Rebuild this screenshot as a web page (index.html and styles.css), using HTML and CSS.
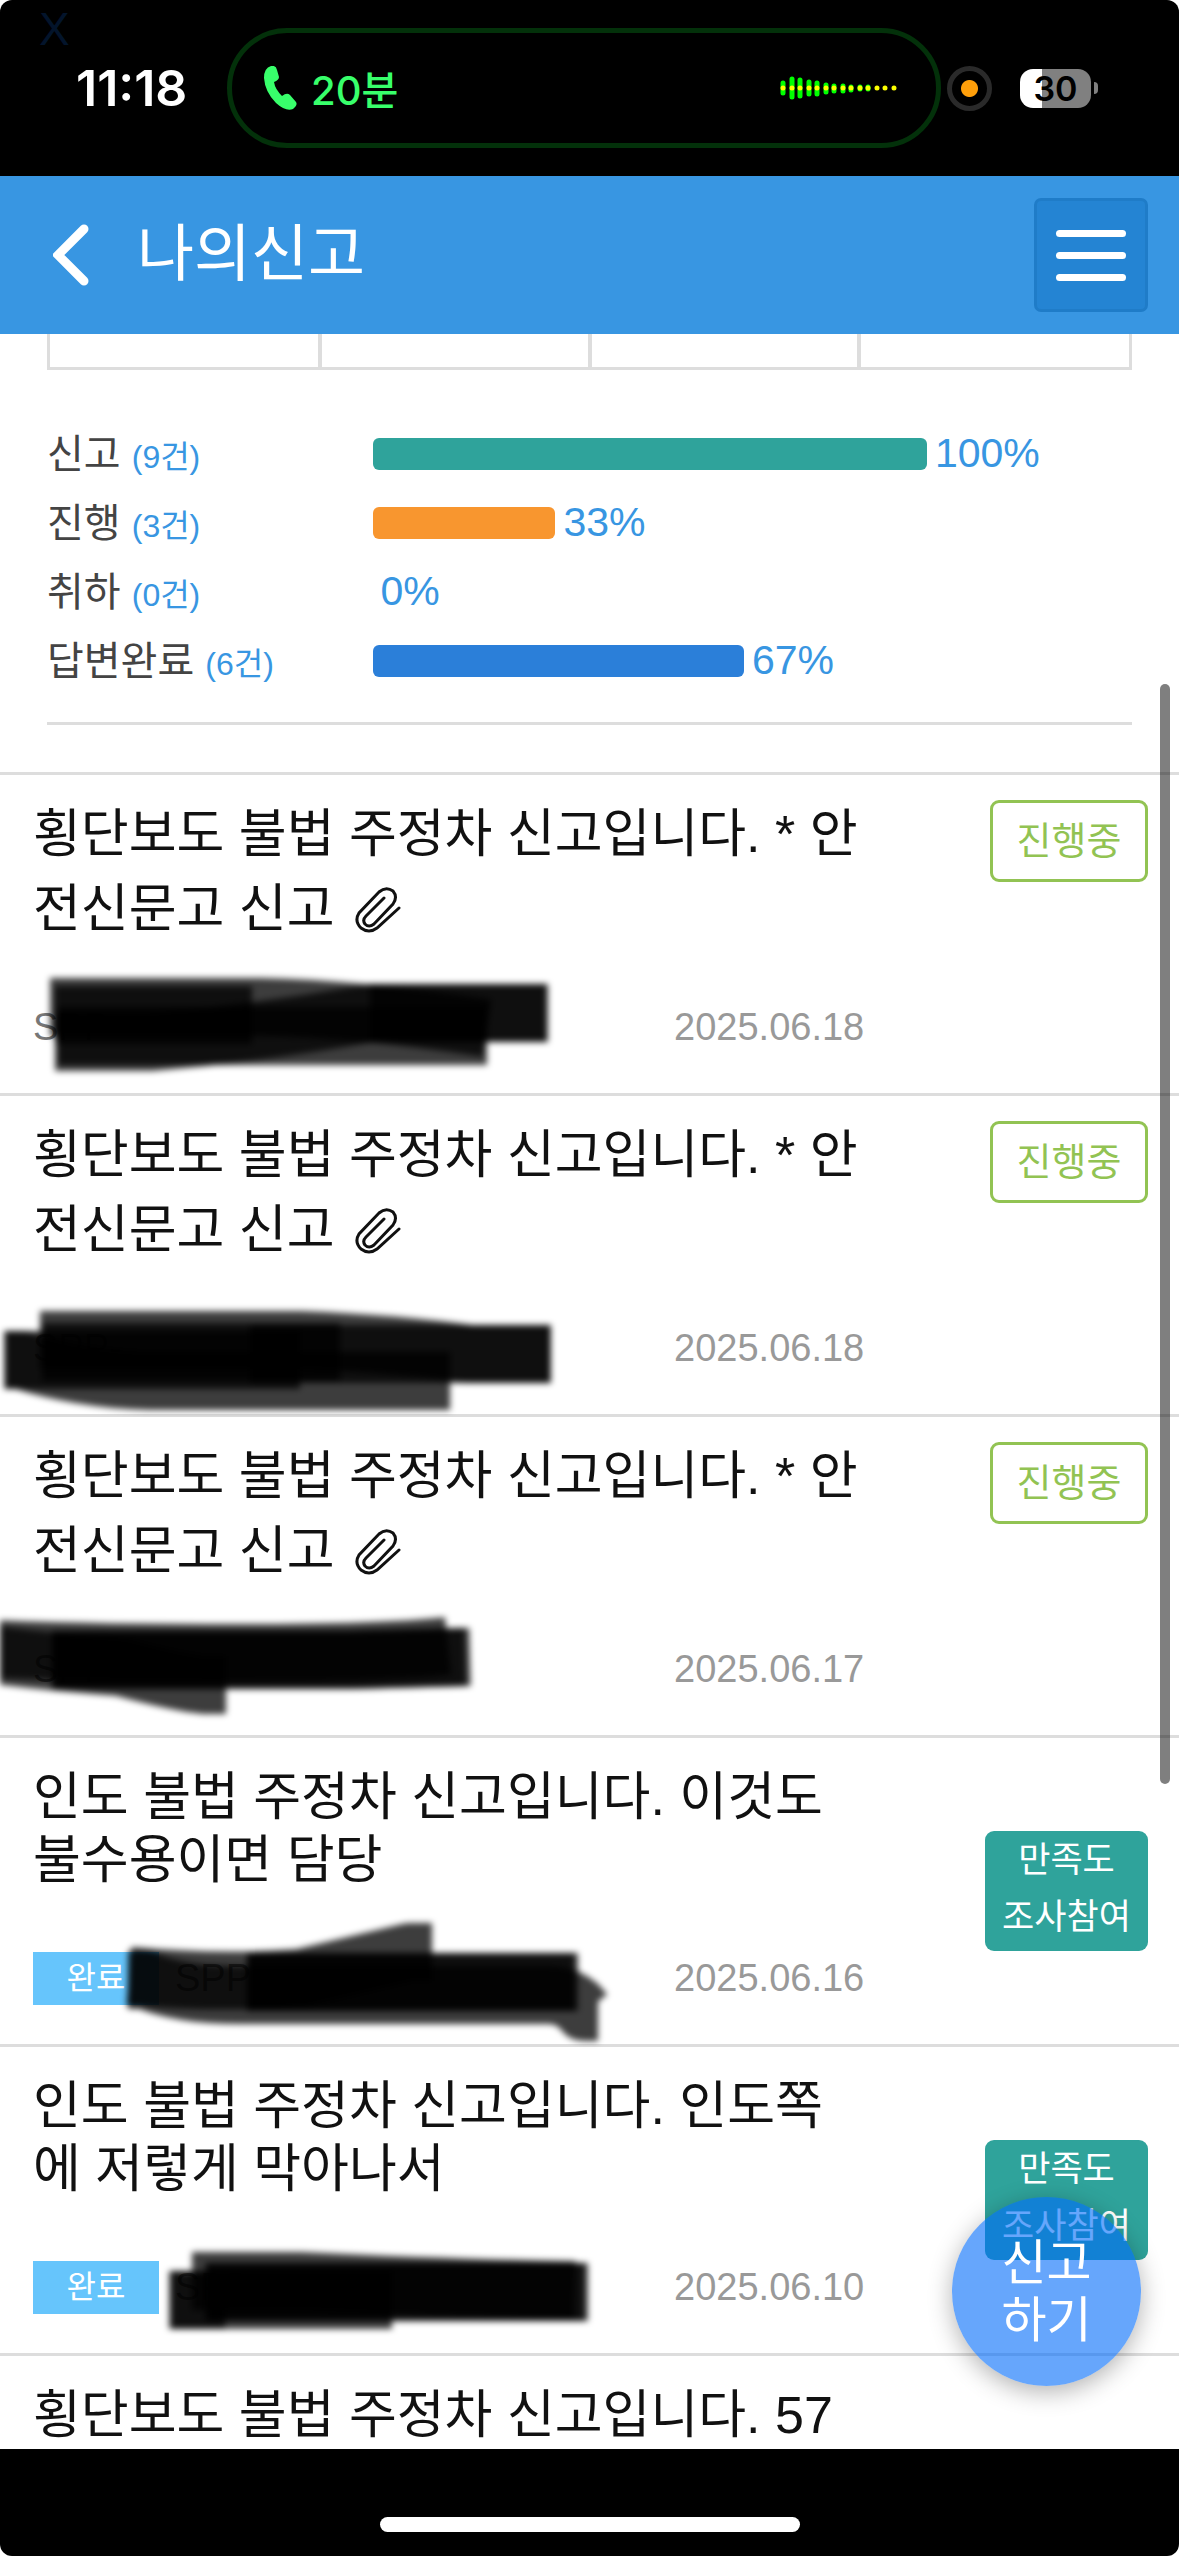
FILE: index.html
```html
<!DOCTYPE html>
<html lang="ko">
<head>
  <meta charset="UTF-8" />
  <meta name="viewport" content="width=device-width, initial-scale=1.0"/>
  <title>나의신고</title>
  <link rel="stylesheet" href="styles.css">
</head>
<body>

<div class="phone">

  <div class="status-bar">
    <span class="ghost-close">X</span>
    <div class="clock">11:18</div>
    <div class="island">
      <svg class="phone-icon" viewBox="0 0 33 45" aria-hidden="true">
        <path d="M0 12Q0 2 7 0Q12 -1 13 4L15 11Q15 14 10 16Q11 23 18 30Q23 26 26 29L32 36Q34 39 29 43Q22 46 12 37Q1 26 0 12Z"/>
      </svg>
      <span class="call-time">20분</span>
      <svg class="wave" viewBox="0 0 118 24" aria-hidden="true">
        <path class="wave-bar" d="M3 7v10M12 3v18M20 4v16M29 6v12M37 7v11M46 9v7M54 10v5M63 10v5M71 11v3M80 11v2M88 11v2"/>
        <path class="wave-dot" d="M3 12h0M12 12h0M20 12h0M29 12h0M37 12h0M46 12h0M54 12h0M63 12h0M71 12h0M80 12h0M88 12h0M97 12h0M105 12h0M114 12h0"/>
      </svg>
    </div>
    <div class="status-right">
      <span class="mic-dot"></span>
      <div class="battery-wrap">
        <span class="battery">30</span>
        <span class="battery-nub"></span>
      </div>
    </div>
  </div>

  <header class="header">
    <button class="back" type="button" aria-label="뒤로">
      <svg viewBox="0 0 36 62" aria-hidden="true"><path d="M31 5L5 31L31 57"/></svg>
    </button>
    <h1 class="title">나의신고</h1>
    <button class="menu" type="button" aria-label="메뉴">
      <span></span><span></span><span></span>
    </button>
  </header>

  <main class="content">
    <section class="summary">
      <div class="tabs"><div></div><div></div><div></div><div></div></div>
      <ul class="stats">
        <li><div class="stat-name">신고 <small>(9건)</small></div><div class="stat-value"><span class="bar teal" style="--value: 100"></span>100%</div></li>
        <li><div class="stat-name">진행 <small>(3건)</small></div><div class="stat-value"><span class="bar orange" style="--value: 33"></span>33%</div></li>
        <li><div class="stat-name">취하 <small>(0건)</small></div><div class="stat-value"><span class="bar" style="--value: 0"></span>0%</div></li>
        <li><div class="stat-name">답변완료 <small>(6건)</small></div><div class="stat-value"><span class="bar blue" style="--value: 67"></span>67%</div></li>
      </ul>
    </section>

    <ul class="reports">
      <li class="report">
        <div class="report-body">
          <a class="report-title" href="#">횡단보도 불법 주정차 신고입니다. * 안전신문고 신고 <svg class="clip" viewBox="0 0 46 46" aria-hidden="true"><path d="M44 21L22 41Q14 47 6 41Q-1 34 4 26L24 5Q31 -1 38 4Q43 10 38 17L19 37Q14 41 10 37Q7 33 11 29L29 11"/></svg></a>
          <div class="meta"><span class="number">SPP-</span><time class="date">2025.06.18</time></div>
        </div>
        <span class="badge">진행중</span>
        <svg class="marker" viewBox="0 0 640 140" aria-hidden="true">
          <path d="M50 54H260Q360 56 487 75"/>
          <path d="M55 89H150Q260 80 372 60H548"/>
          <path d="M58 83H487"/>
          <path d="M55 62H252"/>
          <path d="M370 60H546"/>
        </svg>
      </li>

      <li class="report">
        <div class="report-body">
          <a class="report-title" href="#">횡단보도 불법 주정차 신고입니다. * 안전신문고 신고 <svg class="clip" viewBox="0 0 46 46" aria-hidden="true"><path d="M44 21L22 41Q14 47 6 41Q-1 34 4 26L24 5Q31 -1 38 4Q43 10 38 17L19 37Q14 41 10 37Q7 33 11 29L29 11"/></svg></a>
          <div class="meta"><span class="number">SPP-</span><time class="date">2025.06.18</time></div>
        </div>
        <span class="badge">진행중</span>
        <svg class="marker" viewBox="0 0 640 140" aria-hidden="true">
          <path d="M40 66H300Q400 70 470 80H551"/>
          <path d="M4 86H20Q80 105 150 107H450"/>
          <path d="M42 78H340"/>
          <path d="M6 86H300"/>
          <path d="M250 80H550"/>
        </svg>
      </li>

      <li class="report">
        <div class="report-body">
          <a class="report-title" href="#">횡단보도 불법 주정차 신고입니다. * 안전신문고 신고 <svg class="clip" viewBox="0 0 46 46" aria-hidden="true"><path d="M44 21L22 41Q14 47 6 41Q-1 34 4 26L24 5Q31 -1 38 4Q43 10 38 17L19 37Q14 41 10 37Q7 33 11 29L29 11"/></svg></a>
          <div class="meta"><span class="number">SPP-</span><time class="date">2025.06.17</time></div>
        </div>
        <span class="badge">진행중</span>
        <svg class="marker" viewBox="0 0 640 140" aria-hidden="true">
          <path d="M-5 54Q100 58 240 58T448 51"/>
          <path d="M-5 60Q60 68 120 72Q180 88 205 90H226"/>
          <path d="M52 65H350L470 62"/>
          <path d="M52 65H350L465 62"/>
        </svg>
      </li>

      <li class="report done">
        <div class="report-body">
          <a class="report-title" href="#">인도 불법 주정차 신고입니다. 이것도 불수용이면 담당</a>
          <div class="meta"><span class="state">완료</span><span class="number">SPP-</span><time class="date">2025.06.16</time></div>
        </div>
        <a class="survey" href="#">만족도<br>조사참여</a>
        <svg class="marker" viewBox="0 0 640 140" aria-hidden="true">
          <path d="M129 72Q220 80 300 74L410 48H432"/>
          <path d="M128 76H145Q180 91 240 91H550Q572 92 584 108H598"/>
          <path d="M247 78H578"/>
          <path d="M247 78H574"/>
        </svg>
      </li>

      <li class="report done">
        <div class="report-body">
          <a class="report-title" href="#">인도 불법 주정차 신고입니다. 인도쪽에 저렇게 막아나서</a>
          <div class="meta"><span class="state">완료</span><span class="number">SPP-</span><time class="date">2025.06.10</time></div>
        </div>
        <a class="survey" href="#">만족도<br>조사참여</a>
        <svg class="marker" viewBox="0 0 640 140" aria-hidden="true">
          <path d="M192 68H300Q450 75 575 77"/>
          <path d="M169 87H392"/>
          <path d="M172 87H225"/>
          <path d="M205 79H588"/>
          <path d="M208 79H584"/>
        </svg>
      </li>

      <li class="report done">
        <div class="report-body">
          <a class="report-title" href="#">횡단보도 불법 주정차 신고입니다. 57</a>
        </div>
        <a class="survey" href="#" aria-label="만족도 조사참여"></a>
      </li>
    </ul>

    <div class="scroll-thumb"></div>
    <button class="fab" type="button">신고<br>하기</button>
  </main>

  <div class="home-bar"><span></span></div>

</div>

</body>
</html>
```
FILE: styles.css
```css
* {
  box-sizing: border-box;
}
body {
  margin: 0;
  background: #fff;
  color: #111;
  font-family: "Liberation Sans", "Noto Sans CJK KR", sans-serif;
}
ul {
  list-style: none;
  margin: 0;
  padding: 0;
}
a {
  color: inherit;
  text-decoration: none;
}
button {
  font-family: inherit;
  padding: 0;
  border: 0;
  background: none;
  color: #fff;
}
.phone {
  display: flex;
  flex-direction: column;
  height: 100vh;
  border-radius: 12px;
  overflow: hidden;
}

/* status bar */
.status-bar {
  position: relative;
  flex: none;
  display: grid;
  grid-template-columns: 227px 1fr 238px;
  align-items: center;
  height: 176px;
  background: #000;
  color: #fff;
  font-family: Inter, "Noto Sans CJK KR", sans-serif;
}
.ghost-close {
  position: absolute;
  left: 39px;
  top: 2px;
  color: #03142b;
  font-family: "Liberation Sans", sans-serif;
  font-size: 46px;
}
.clock {
  padding-left: 76px;
  font-size: 50px;
  font-weight: 600;
}
.island {
  display: flex;
  align-items: center;
  height: 120px;
  padding: 0 38px 0 32px;
  border: 5px solid #03310a;
  border-radius: 60px;
}
.phone-icon {
  width: 33px;
  height: 45px;
  fill: #38ff6b;
}
.call-time {
  margin-left: 14px;
  color: #38ff6b;
  font-size: 40px;
  font-weight: 500;
}
.wave {
  width: 118px;
  height: 24px;
  margin-left: auto;
  fill: none;
  stroke-linecap: round;
  stroke-width: 5;
}
.wave-bar {
  stroke: #0f0;
}
.wave-dot {
  stroke: #fdff00;
}
.status-right {
  display: flex;
  align-items: center;
  gap: 28px;
  padding-left: 6px;
}
.mic-dot {
  width: 45px;
  height: 45px;
  border: 5px solid #2a2a2a;
  border-radius: 50%;
  background: radial-gradient(circle, #ff9f0a 8px, #000 9px);
}
.battery-wrap {
  display: flex;
  align-items: center;
  gap: 3px;
}
.battery {
  width: 71px;
  height: 39px;
  border-radius: 13px;
  background: linear-gradient(to right, #fff 31%, #808080 31%);
  color: #000;
  font-size: 34px;
  font-weight: 600;
  line-height: 39px;
  text-align: center;
}
.battery-nub {
  width: 4px;
  height: 12px;
  border-radius: 0 4px 4px 0;
  background: #808080;
}

/* header */
.header {
  flex: none;
  display: flex;
  align-items: center;
  height: 158px;
  padding: 0 31px 0 53px;
  background: #3896e2;
  color: #fff;
}
.back svg {
  display: block;
  width: 36px;
  height: 62px;
  fill: none;
  stroke: #fff;
  stroke-width: 9;
  stroke-linecap: round;
}
.title {
  flex: 1;
  margin: 0 0 0 48px;
  font-size: 62px;
  font-weight: 400;
  line-height: 80px;
}
.menu {
  display: flex;
  flex-direction: column;
  align-items: center;
  justify-content: center;
  gap: 15px;
  width: 114px;
  height: 114px;
  border: 3px solid #1f7cc8;
  border-radius: 7px;
  background: #2484d3;
}
.menu span {
  width: 70px;
  height: 7px;
  border-radius: 4px;
  background: #fff;
}

/* summary */
.content {
  position: relative;
  flex: 1;
  min-height: 0;
  overflow: hidden;
}
.summary {
  margin: 0 47px;
  border-bottom: 3px solid #ddd;
}
.tabs {
  display: grid;
  grid-template-columns: repeat(4, 1fr);
  height: 36px;
  border: 3px solid #ddd;
  border-top: 0;
}
.tabs div + div {
  margin-left: -2px;
  border-left: 4px solid #ddd;
}
.stats {
  padding: 49px 0 27px;
}
.stats li {
  display: flex;
  align-items: center;
  height: 69px;
}
.stat-name {
  width: 30%;
  padding-bottom: 6px;
  color: #444;
  font-size: 40px;
}
.stat-name small {
  color: #3896e2;
  font-size: 32px;
}
.stat-value {
  flex: 1;
  display: flex;
  align-items: center;
  gap: 8px;
  color: #3896e2;
  font-size: 41px;
}
.bar {
  width: calc(var(--value) * 0.73%);
  height: 32px;
  border-radius: 6px;
}
.teal {
  background: #2fa39b;
}
.orange {
  background: #f8962f;
}
.blue {
  background: #2b7fd9;
}

/* report list */
.reports {
  margin-top: 47px;
  border-top: 3px solid #ddd;
}
.report {
  position: relative;
  display: grid;
  grid-template-columns: 75% 25%;
  min-height: 309px;
  padding: 0 31px 0 33px;
  border-bottom: 3px solid #ddd;
}
.report-body {
  padding: 22px 0 39px;
}
.report-title {
  display: block;
  font-size: 52px;
  line-height: 75px;
  word-break: break-all;
}
.done .report-body {
  padding-top: 28px;
}
.done .report-title {
  line-height: 63px;
}
.clip {
  width: 46px;
  height: 46px;
  margin-left: 6px;
  vertical-align: -6px;
  fill: none;
  stroke: #111;
  stroke-width: 3;
  stroke-linecap: round;
}
.meta {
  display: flex;
  align-items: center;
  height: 53px;
  margin-top: 54px;
  font-size: 38px;
}
.done .meta {
  margin-top: 60px;
}
.state {
  width: 126px;
  margin-right: 16px;
  background: #66c5fc;
  color: #fff;
  font-size: 32px;
  line-height: 53px;
  text-align: center;
}
.number {
  color: #777;
}
.date {
  margin-left: auto;
  padding-right: 5px;
  color: #999;
}
.badge {
  justify-self: end;
  width: 158px;
  height: 82px;
  margin-top: 25px;
  border: 3px solid #92c353;
  border-radius: 9px;
  color: #92c353;
  font-size: 38px;
  line-height: 76px;
  text-align: center;
}
.survey {
  align-self: center;
  justify-self: end;
  width: 163px;
  height: 120px;
  border-radius: 9px;
  background: #2fa39b;
  color: #fff;
  font-size: 35px;
  line-height: 57px;
  text-align: center;
}

/* black marker over the report number */
.marker {
  position: absolute;
  left: 0;
  bottom: 0;
  width: 640px;
  height: 140px;
  fill: none;
  stroke: rgba(0, 0, 0, 0.76);
  stroke-width: 58;
  stroke-linejoin: round;
  filter: blur(3px);
}

.scroll-thumb {
  position: absolute;
  top: 350px;
  right: 9px;
  width: 10px;
  height: 1100px;
  border-radius: 5px;
  background: rgba(0, 0, 0, 0.5);
}
.fab {
  position: absolute;
  right: 38px;
  bottom: 63px;
  width: 189px;
  height: 189px;
  border-radius: 50%;
  background: rgba(0, 107, 250, 0.6);
  box-shadow: 0 6px 24px rgba(0, 0, 0, 0.3);
  font-size: 49px;
  font-weight: 400;
  line-height: 57px;
}

.home-bar {
  flex: none;
  display: flex;
  align-items: flex-end;
  justify-content: center;
  height: 107px;
  padding-bottom: 24px;
  background: #000;
}
.home-bar span {
  width: 420px;
  height: 15px;
  border-radius: 8px;
  background: #fff;
}
```
